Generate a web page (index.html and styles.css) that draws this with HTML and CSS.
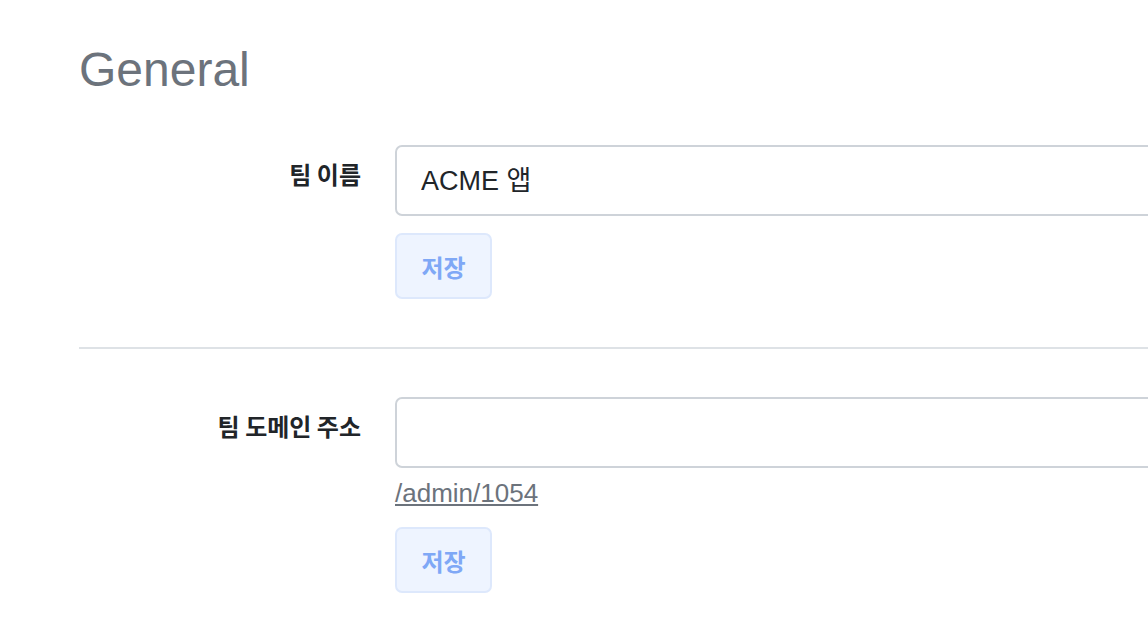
FILE: index.html
```html
<!DOCTYPE html>
<html>
<head>
    <title>General</title>
    <meta name="viewport" content="width=device-width, initial-scale=1">
    <link rel="stylesheet" href="styles.css">
</head>
<body>
    <div class="page">
        <h1 class="title">General</h1>

        <!-- 팀 이름 -->
        <section class="field-row">
            <label class="field-label" for="team-name">팀 이름</label>
            <div class="field-body">
                <input class="text-input" id="team-name" type="text" value="ACME 앱">
                <button class="save-button">저장</button>
            </div>
        </section>

        <hr class="divider">

        <!-- 팀 도메인 주소 -->
        <section class="field-row">
            <label class="field-label" for="team-domain">팀 도메인 주소</label>
            <div class="field-body">
                <input class="text-input" id="team-domain" type="text" value="">
                <a class="domain-link" href="#">/admin/1054</a>
                <button class="save-button">저장</button>
            </div>
        </section>
    </div>
</body>
</html>
```
FILE: styles.css
```css
/* 기본 */
body, html {
    margin: 0;
    background-color: #ffffff;
    overflow: hidden;
    font-family: "Liberation Sans", "Noto Sans CJK KR", sans-serif;
}

.page {
    padding: 42px 0 0 79px;
    width: 1300px;
}

.title {
    margin: 0 0 47px 0;
    font-size: 48px;
    font-weight: 400;
    line-height: 56px;
    color: #6c737c;
}

/* 필드 행 */
.field-row {
    display: flex;
    gap: 34px;
}

.field-label {
    width: 282px;
    flex-shrink: 0;
    text-align: right;
    font-family: "Noto Sans CJK KR", sans-serif;
    font-size: 24px;
    font-weight: 700;
    color: #212529;
    padding-top: 11px;
    line-height: 36px;
}

.field-body {
    display: flex;
    flex-direction: column;
    align-items: flex-start;
}

.text-input {
    box-sizing: border-box;
    width: 900px;
    height: 71px;
    padding: 0 24px 4px 24px;
    border: 2px solid #ced3d9;
    border-radius: 7px;
    font-family: "Liberation Sans", "Noto Sans CJK KR", sans-serif;
    font-size: 27px;
    color: #212529;
    outline: none;
}

.save-button {
    box-sizing: border-box;
    margin-top: 17px;
    width: 97px;
    height: 66px;
    background-color: #eef4ff;
    border: 2px solid #dde8fc;
    border-radius: 7px;
    font-family: "Noto Sans CJK KR", sans-serif;
    font-size: 24px;
    font-weight: 700;
    color: #7fa8f6;
    cursor: pointer;
}

.domain-link {
    margin-top: 9px;
    font-size: 26px;
    line-height: 32px;
    color: #6c737c;
    text-decoration: underline;
}

.domain-link + .save-button {
    margin-top: 18px;
}

.divider {
    margin: 48px 0 48px 0;
    border: 0;
    border-top: 2px solid #dee2e6;
}
```
